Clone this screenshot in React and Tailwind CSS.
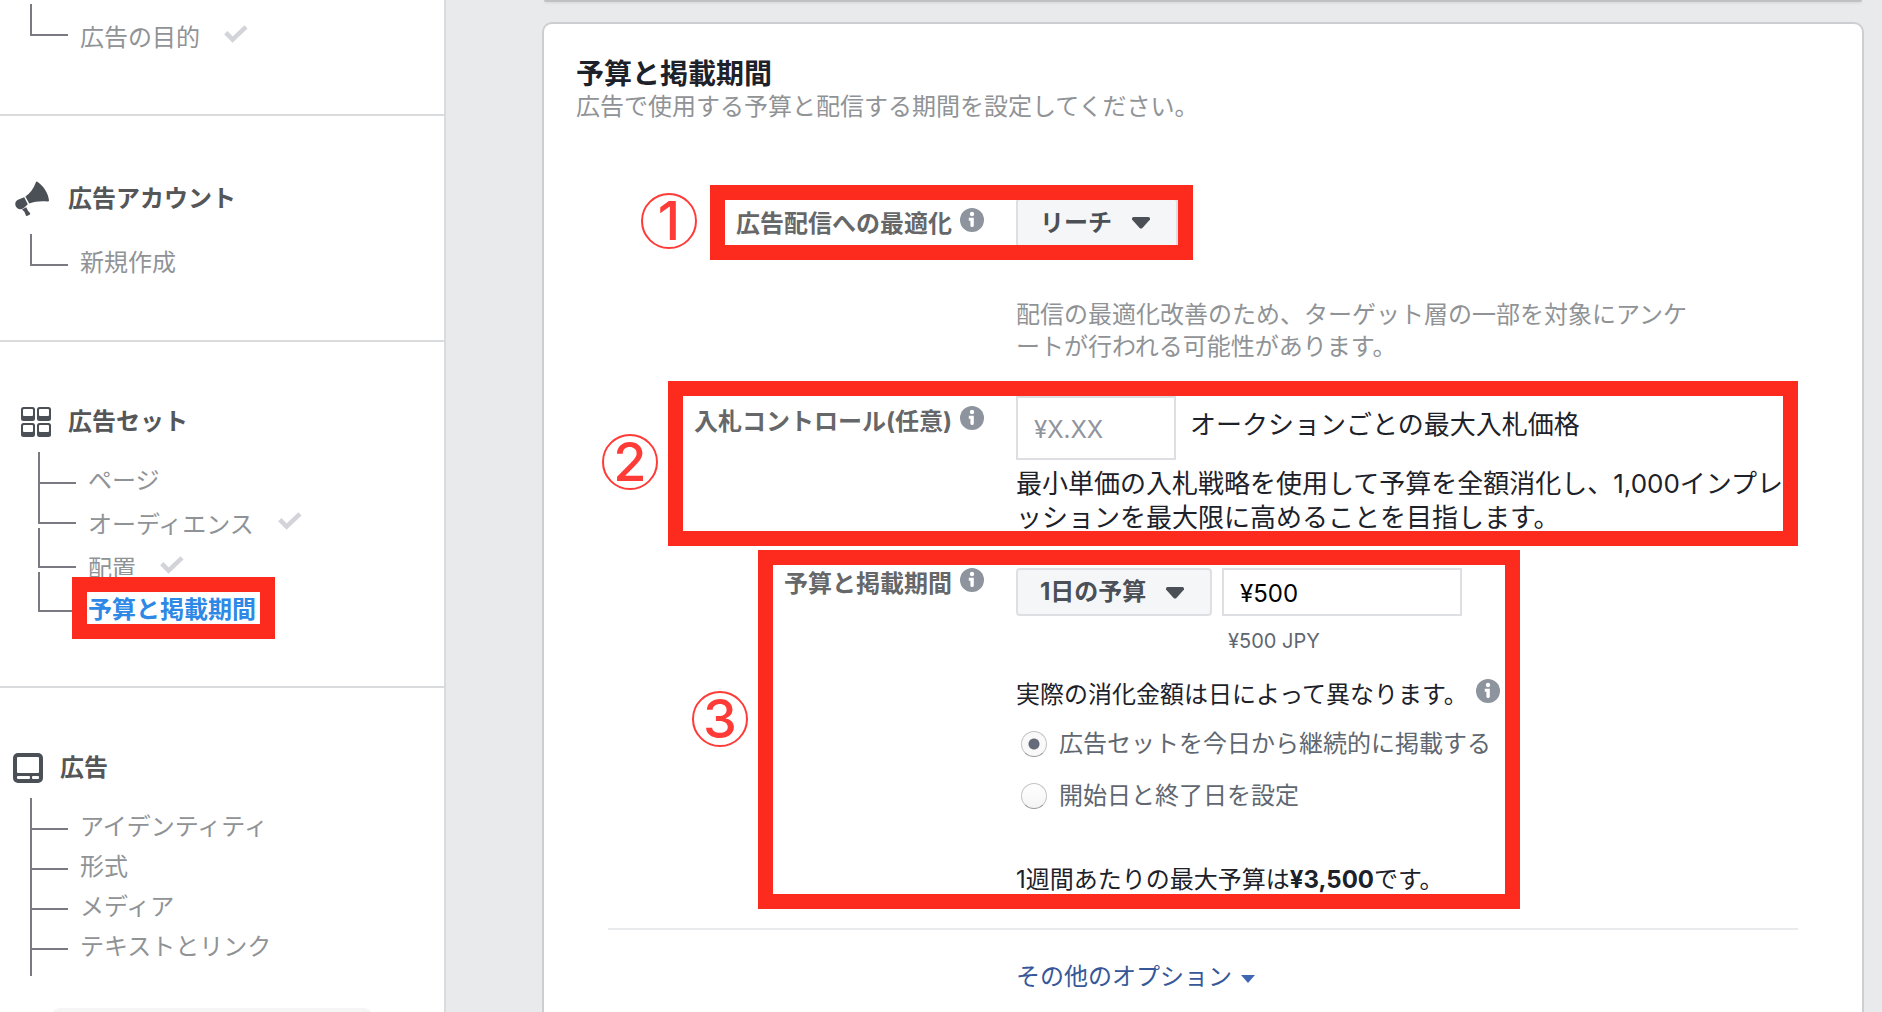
import React from "react";

function Check() {
  return (
    <svg viewBox="0 0 24 18" className="h-[18px] w-6" aria-hidden="true">
      <path d="M1.8 7.6 L8.6 14.6 L22 1.9" fill="none" stroke="#d3d3da" strokeWidth="4.6" />
    </svg>
  );
}

function Info() {
  return (
    <svg viewBox="0 0 24 24" className="size-6 shrink-0" aria-hidden="true">
      <circle cx="12" cy="12" r="12" fill="#8d949e" />
      <circle cx="12" cy="6" r="2.2" fill="#fff" />
      <path d="M8.8 9.8h5v7.6a1.7 1.7 0 0 1-3.4 0v-4.6H8.8z" fill="#fff" />
    </svg>
  );
}

function Megaphone() {
  return (
    <svg viewBox="0 0 34 36" className="h-9 w-[34px]" fill="#4b4f56" aria-hidden="true">
      <path d="M22.4 .7 C28.5 5 33.3 12 34 19.6 Q33.8 20.6 32.8 20.6 C26 20 20 20.4 14.2 22.6 L10.4 15.6 C15.4 12.3 18.6 7.4 20.8 1.6 Q21.4 .3 22.4 .7z" />
      <path d="M9.2 16.2 L12.8 23.2 L9.4 26.4 C6.6 29.2 2.4 28.6 .9 25.6 C-.6 22.4 .6 20 3.6 18.6z" />
      <path d="M7 28.4 L11.2 26.2 L13 29.8 L15.2 32.2 L15 33.4 L12 35 L11 34.7 L9.4 30.8z" />
    </svg>
  );
}

function GridIcon() {
  const cells = [[0, 0], [16, 0], [0, 16], [16, 16]];
  return (
    <svg viewBox="0 0 30 30" className="size-[30px]" aria-hidden="true">
      {cells.map(([x, y]) => (
        <g key={x + "-" + y}>
          <rect x={x} y={y} width="14" height="14" rx="2.5" fill="#4b4f56" />
          <rect x={x + 2} y={y + 2} width="10" height="7" rx="1" fill="#fff" />
        </g>
      ))}
    </svg>
  );
}

function AdIcon() {
  return (
    <svg viewBox="0 0 30 30" className="size-[30px]" aria-hidden="true">
      <rect width="30" height="30" rx="5" fill="#4b4f56" />
      <rect x="4" y="4" width="22" height="16" rx="1" fill="#fff" />
      <rect x="4" y="23" width="13" height="3" rx="1" fill="#fff" />
      <rect x="19" y="23" width="7" height="3" rx="1" fill="#fff" />
    </svg>
  );
}

function SectionTitle({ icon, children }) {
  return (
    <h2 className="flex items-center text-2xl/8 font-bold text-[#555658]">
      {icon}
      {children}
    </h2>
  );
}

function Highlight({ className }) {
  return <span aria-hidden="true" className={"pointer-events-none absolute border-[15px] border-[#fd2a1e] " + className} />;
}

function Step({ className, children }) {
  return (
    <span
      className={
        "absolute flex size-14 items-center justify-center rounded-full border-2 border-[#ff3b38] text-[54px]/[54px] font-medium text-[#ff3b38] " +
        className
      }
    >
      {children}
    </span>
  );
}

function TreeItem({ line, text, done, active, children }) {
  return (
    <li className={"flex items-start " + line}>
      <span className="w-[38px] shrink-0 self-stretch border-b-2 border-l-2 border-[#7b7a82]" />
      <a
        href="#"
        className={
          "relative ml-3 whitespace-nowrap text-2xl/8 " + text + (active ? " font-bold text-[#2d88e6]" : " text-[#909396]")
        }
      >
        {children}
        {active && <Highlight className="-top-[17px] -left-4 -right-[19px] -bottom-[13px]" />}
      </a>
      {done && (
        <span className={"ml-6 flex h-6 items-center " + text}>
          <Check />
        </span>
      )}
    </li>
  );
}

function Sidebar() {
  return (
    <nav className="w-[446px] shrink-0 border-r-2 border-[#dadbdd] bg-white">
      <section className="border-b-2 border-[#dadbdd] pt-1 pb-[78px]">
        <ul className="pl-[30px]">
          <TreeItem line="h-8" text="mt-[18px]" done>広告の目的</TreeItem>
        </ul>
      </section>

      <section className="border-b-2 border-[#dadbdd] pt-[65px] pb-[74px]">
        <div className="pl-[15px]">
          <SectionTitle icon={<span className="mr-[19px]"><Megaphone /></span>}>広告アカウント</SectionTitle>
        </div>
        <ul className="mt-[17px] pl-[30px]">
          <TreeItem line="h-8" text="mt-[13px]">新規作成</TreeItem>
        </ul>
      </section>

      <section className="border-b-2 border-[#dadbdd] pt-16 pb-[74px]">
        <div className="pl-[21px]">
          <SectionTitle icon={<span className="mr-[17px]"><GridIcon /></span>}>広告セット</SectionTitle>
        </div>
        <ul className="mt-[14px] pl-[38px]">
          <TreeItem line="h-8" text="mt-[13px]">ページ</TreeItem>
          <TreeItem line="h-10" text="mt-[25px]" done>オーディエンス</TreeItem>
          <TreeItem line="mt-1 h-10" text="mt-[25px]" done>配置</TreeItem>
          <TreeItem line="mt-1 h-10" text="mt-[22px]" active>予算と掲載期間</TreeItem>
        </ul>
      </section>

      <section className="pt-16">
        <div className="pl-[13px]">
          <SectionTitle icon={<span className="mr-[17px]"><AdIcon /></span>}>広告</SectionTitle>
        </div>
        <ul className="mt-[14px] pl-[30px]">
          <TreeItem line="h-8" text="mt-[13px]">アイデンティティ</TreeItem>
          <TreeItem line="h-10" text="mt-[21px]">形式</TreeItem>
          <TreeItem line="h-10" text="mt-[21px]">メディア</TreeItem>
          <TreeItem line="h-10" text="mt-[21px]">テキストとリンク</TreeItem>
          <li aria-hidden="true" className="h-[26px] w-0.5 bg-[#7b7a82]" />
        </ul>
        <div className="mt-8 mr-[72px] ml-[52px] h-12 rounded-lg bg-[#f5f5f5]" />
      </section>
    </nav>
  );
}

function FieldLabel({ className, htmlFor, children }) {
  return (
    <div className={"flex w-[376px] shrink-0 items-start justify-end gap-2 " + className}>
      <label htmlFor={htmlFor} className="text-2xl/8 font-bold text-[#666768]">{children}</label>
      <Info />
    </div>
  );
}

function Dropdown({ id, className, children }) {
  return (
    <div className={"relative " + className}>
      <select
        id={id}
        className="size-full appearance-none rounded border-2 border-[#dddfe2] bg-[#f5f6f7] pl-[22px] text-2xl font-bold text-[#4b4f56]"
      >
        <option>{children}</option>
      </select>
      <svg viewBox="0 0 18 12" className="pointer-events-none absolute top-[19px] right-[28px] h-3 w-[18px]" aria-hidden="true">
        <path d="M1.6 0h14.8q1.6 0 1.6 1.6v1L10.4 11q-1.4 1-2.8 0L0 2.6v-1Q0 0 1.6 0z" fill="#4b4f56" />
      </svg>
    </div>
  );
}

function Radio({ id, className, defaultChecked, children }) {
  return (
    <div className={"flex items-center pl-[5px] " + className}>
      <input
        id={id}
        type="radio"
        name="schedule"
        defaultChecked={defaultChecked}
        className="size-[26px] shrink-0 appearance-none rounded-full border border-[#c3c4c6] border-b-[#9a9b9d] bg-linear-to-b from-white to-[#f4f4f4] checked:bg-[radial-gradient(circle,#656b7b_5px,#f9f9f9_6px)]"
      />
      <label htmlFor={id} className="ml-3 text-2xl/8 whitespace-nowrap text-[#606770]">{children}</label>
    </div>
  );
}

export default function App() {
  return (
    <div className="flex h-screen overflow-hidden bg-[#e9eaec] font-['Inter','Noto_Sans_CJK_JP',sans-serif]">
      <Sidebar />
      <main className="flex min-w-0 flex-1 flex-col pr-[18px] pl-24">
        <div className="mx-0.5 h-0.5 shrink-0 rounded-b bg-[#c0c1c3] shadow-sm" />
        <section className="mt-5 flex-1 rounded-t-[10px] border-2 border-b-0 border-[#cdced1] bg-white px-8 pt-[33px]">
          <h1 className="text-[28px]/[34px] font-bold text-[#1d2129]">予算と掲載期間</h1>
          <p className="text-2xl/8 text-[#909396]">広告で使用する予算と配信する期間を設定してください。</p>

          <form className="mx-8 mt-[75px]">
            <div className="relative flex gap-8">
              <FieldLabel className="pt-[10px]" htmlFor="optimize">広告配信への最適化</FieldLabel>
              <Dropdown id="optimize" className="h-[50px] w-[162px]">リーチ</Dropdown>
              <Highlight className="-top-[13px] left-[102px] h-[75px] w-[483px]" />
              <Step className="-top-[5px] left-[33px]">1</Step>
            </div>
            <p className="mt-[51px] ml-[408px] text-2xl/8 whitespace-nowrap text-[#909396]">
              配信の最適化改善のため、ターゲット層の一部を対象にアンケ
              <br />
              ートが行われる可能性があります。
            </p>

            <div className="relative mt-[33px] flex gap-8">
              <FieldLabel className="pt-[10px]" htmlFor="bid">入札コントロール(任意)</FieldLabel>
              <div>
                <div className="flex gap-[14px]">
                  <input
                    id="bid"
                    type="text"
                    placeholder="¥X.XX"
                    className="h-16 w-40 border-2 border-[#dddfe2] pt-0.5 pl-4 text-2xl placeholder:text-[#90949c]"
                  />
                  <span className="mt-3 text-[26px]/[34px] text-[#1d2129]">オークションごとの最大入札価格</span>
                </div>
                <p className="mt-[7px] text-[26px]/[34px] whitespace-nowrap text-[#1d2129]">
                  最小単価の入札戦略を使用して予算を全額消化し、1,000インプレ
                  <br />
                  ッションを最大限に高めることを目指します。
                </p>
              </div>
              <Highlight className="-top-[15px] right-0 left-[60px] h-[165px]" />
              <Step className="top-[38px] -left-[6px]">2</Step>
            </div>

            <div className="relative mt-[33px] flex gap-8">
              <FieldLabel className="" htmlFor="budget">予算と掲載期間</FieldLabel>
              <div>
                <div className="flex gap-[10px]">
                  <Dropdown id="budget" className="h-12 w-[196px]">1日の予算</Dropdown>
                  <div>
                    <input
                      type="text"
                      defaultValue="¥500"
                      aria-label="予算額"
                      className="block h-12 w-60 border-2 border-[#dddfe2] pt-0.5 pl-4 text-2xl text-black"
                    />
                    <p className="mt-[13px] pl-[6px] text-xl/6 text-[#606770]">¥500 JPY</p>
                  </div>
                </div>
                <p className="mt-[26px] flex items-start gap-2 text-2xl/8 whitespace-nowrap text-[#1d2129]">
                  実際の消化金額は日によって異なります。
                  <Info />
                </p>
                <Radio id="ongoing" className="mt-[17px]" defaultChecked>広告セットを今日から継続的に掲載する</Radio>
                <Radio id="dates" className="mt-5">開始日と終了日を設定</Radio>
                <p className="mt-[52px] text-2xl/8 whitespace-nowrap text-[#1d2129]">
                  1週間あたりの最大予算は<b className="font-bold">¥3,500</b>です。
                </p>
              </div>
              <Highlight className="-top-[18px] left-[150px] h-[359px] w-[762px]" />
              <Step className="top-[123px] left-[84px]">3</Step>
            </div>

            <hr className="mt-8 border-t-2 border-[#e9eaec]" />
            <button type="button" className="mt-[31px] ml-[408px] flex items-center gap-[9px] text-2xl/8 text-[#365899]">
              その他のオプション
              <svg viewBox="0 0 14 8" className="mt-1 h-2 w-[14px]" aria-hidden="true">
                <path d="M0 0h14L7 8z" fill="#4267b2" />
              </svg>
            </button>
          </form>
        </section>
      </main>
    </div>
  );
}
